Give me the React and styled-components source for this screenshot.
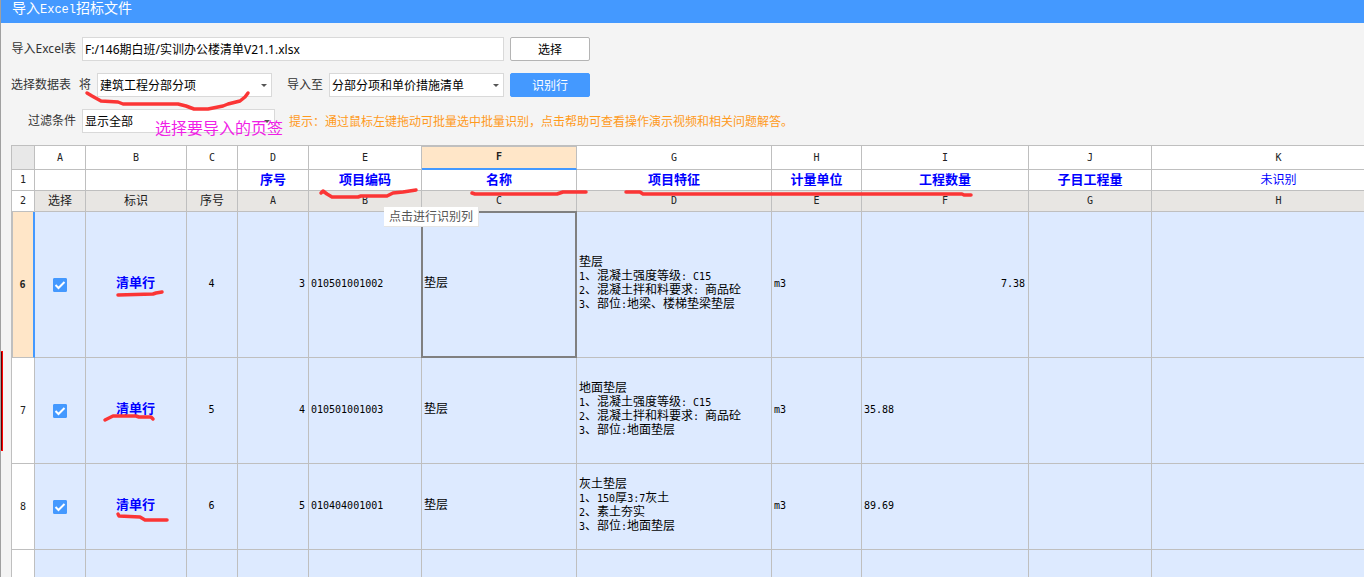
import React, { useState } from 'react';
import styled, { createGlobalStyle, css } from 'styled-components';

const columns = [
  { letter: 'A', width: 51, title: '', source: '选择' },
  { letter: 'B', width: 101, title: '', source: '标识' },
  { letter: 'C', width: 51, title: '', source: '序号' },
  { letter: 'D', width: 71, title: '序号', source: 'A' },
  { letter: 'E', width: 113, title: '项目编码', source: 'B' },
  { letter: 'F', width: 155, title: '名称', source: 'C' },
  { letter: 'G', width: 195, title: '项目特征', source: 'D' },
  { letter: 'H', width: 90, title: '计量单位', source: 'E' },
  { letter: 'I', width: 167, title: '工程数量', source: 'F' },
  { letter: 'J', width: 123, title: '子目工程量', source: 'G' },
  { letter: 'K', width: 254, title: '未识别', source: 'H', plain: true },
];

const rows = [
  {
    id: 6,
    height: 146,
    index: 4,
    order: 3,
    code: '010501001002',
    name: '垫层',
    feature: [
      '垫层',
      '1、混凝土强度等级: C15',
      '2、混凝土拌和料要求: 商品砼',
      '3、部位:地梁、楼梯垫梁垫层',
    ],
    unit: 'm3',
    amount: '7.38',
    amountAlign: 'right',
  },
  {
    id: 7,
    height: 106,
    index: 5,
    order: 4,
    code: '010501001003',
    name: '垫层',
    feature: [
      '地面垫层',
      '1、混凝土强度等级: C15',
      '2、混凝土拌和料要求: 商品砼',
      '3、部位:地面垫层',
    ],
    unit: 'm3',
    amount: '35.88',
    amountAlign: 'left',
  },
  {
    id: 8,
    height: 86,
    index: 6,
    order: 5,
    code: '010404001001',
    name: '垫层',
    feature: ['灰土垫层', '1、150厚3:7灰土', '2、素土夯实', '3、部位:地面垫层'],
    unit: 'm3',
    amount: '89.69',
    amountAlign: 'left',
  },
];

const strokes = [
  '87,93 92,96 101,101 118,102 123,104 178,104 186,106 194,109 208,109 223,106 228,104 240,101 245,97 248,93',
  '321,193 323,191 327,194 332,197 358,197 361,196 387,196 393,193 403,192 416,190',
  '472,193 475,194 557,194 563,192 586,192',
  '626,192 640,192 643,194 962,194 964,195 971,195',
  '118,295 153,294 156,293 162,292',
  '105,420 113,416 136,416 139,417 151,417 153,419',
  '118,514 119,516 140,517 145,520 167,520',
];

// half-width characters take exactly half of a Chinese one
const GridText = ({ children }) =>
  String(children)
    .split(/([ -~]+)/)
    .map((part, i) => (i % 2 ? <Latin key={i}>{part}</Latin> : part));

const SelectBox = ({ id, options, wide }) => (
  <SelectWrap $wide={wide}>
    <Select id={id}>
      {options.map((option) => (
        <option key={option}>{option}</option>
      ))}
    </Select>
  </SelectWrap>
);

const RowCheck = ({ id }) => {
  const [checked, setChecked] = useState(true);
  return (
    <CheckWrap>
      <CheckInput
        type='checkbox'
        aria-label={`选择 ${id}`}
        checked={checked}
        onChange={() => setChecked(!checked)}
      />
      {checked && (
        <CheckMark viewBox='0 0 14 14'>
          <path d='M2.5 7 L5.5 10 L11.5 4' />
        </CheckMark>
      )}
    </CheckWrap>
  );
};

const App = () => {
  const [path, setPath] = useState('F:/146期白班/实训办公楼清单V21.1.xlsx');
  return (
    <Page>
      <GlobalStyle />
      <TitleBar>
        导入<TitleLatin>Excel</TitleLatin>招标文件
      </TitleBar>

      <Form>
        <FormRow>
          <Label htmlFor='path'>导入Excel表</Label>
          <PathInput
            id='path'
            value={path}
            onChange={(e) => setPath(e.target.value)}
          />
          <Button>选择</Button>
        </FormRow>
        <FormRow>
          <LabelPair htmlFor='sheet'>
            <span>选择数据表</span>
            <span>将</span>
          </LabelPair>
          <SelectBox id='sheet' options={['建筑工程分部分项']} />
          <Label htmlFor='target' $spaced>
            导入至
          </Label>
          <SelectBox id='target' options={['分部分项和单价措施清单']} />
          <Button $primary>识别行</Button>
        </FormRow>
        <FormRow>
          <Label htmlFor='filter'>过滤条件</Label>
          <SelectBox id='filter' options={['显示全部']} wide />
          <Hint>
            提示：通过鼠标左键拖动可批量选中批量识别，点击帮助可查看操作演示视频和相关问题解答。
          </Hint>
        </FormRow>
      </Form>

      <TableArea>
        <Table>
          <colgroup>
            <Col $width={23} />
            {columns.map((col) => (
              <Col key={col.letter} $width={col.width} />
            ))}
          </colgroup>
          <thead>
            <Row $height={24}>
              <Corner />
              {columns.map((col) => (
                <HeadCell key={col.letter} $activeCol={col.letter === 'F'}>
                  <GridText>{col.letter}</GridText>
                </HeadCell>
              ))}
            </Row>
          </thead>
          <tbody>
            <Row $height={21}>
              <HeadCell>
                <GridText>1</GridText>
              </HeadCell>
              {columns.map((col) => (
                <TitleCell key={col.letter} $plain={col.plain}>
                  {col.title}
                </TitleCell>
              ))}
            </Row>
            <Row $height={21}>
              <HeadCell>
                <GridText>2</GridText>
              </HeadCell>
              {columns.map((col) => (
                <SourceCell key={col.letter}>
                  <GridText>{col.source}</GridText>
                </SourceCell>
              ))}
            </Row>
            {rows.map((row) => (
              <Row key={row.id} $height={row.height}>
                <HeadCell $activeRow={row.id === 6}>
                  <GridText>{row.id}</GridText>
                </HeadCell>
                <DataCell $align='center'>
                  <RowCheck id={row.id} />
                </DataCell>
                <DataCell $align='center'>
                  <Mark>清单行</Mark>
                </DataCell>
                <DataCell $align='center'>
                  <GridText>{row.index}</GridText>
                </DataCell>
                <DataCell $align='right'>
                  <GridText>{row.order}</GridText>
                </DataCell>
                <DataCell>
                  <GridText>{row.code}</GridText>
                </DataCell>
                <DataCell $selected={row.id === 6}>{row.name}</DataCell>
                <DataCell>
                  {row.feature.map((line) => (
                    <Line key={line}>
                      <GridText>{line}</GridText>
                    </Line>
                  ))}
                </DataCell>
                <DataCell>
                  <GridText>{row.unit}</GridText>
                </DataCell>
                <DataCell $align={row.amountAlign}>
                  <GridText>{row.amount}</GridText>
                </DataCell>
                <DataCell />
                <DataCell />
              </Row>
            ))}
            <Row $height={86}>
              <HeadCell />
              {columns.map((col) => (
                <DataCell key={col.letter} />
              ))}
            </Row>
          </tbody>
        </Table>
      </TableArea>

      <Tooltip>点击进行识别列</Tooltip>
      <Note>选择要导入的页签</Note>
      <Ink>
        {strokes.map((points) => (
          <polyline key={points} points={points} />
        ))}
        <rect x='0' y='351' width='3' height='100' fill='#ff0000' />
        <rect x='1' y='352' width='1' height='98' fill='#600000' />
      </Ink>
    </Page>
  );
};

export default App;

const uiFont = `'Noto Sans', 'Noto Sans CJK SC', sans-serif`;
const gridFont = `'Liberation Serif', 'Noto Sans CJK SC', serif`;
const latinFont = `'DejaVu Sans Mono', monospace`;

const GlobalStyle = createGlobalStyle`
  * {
    box-sizing: border-box;
  }
  body {
    margin: 0;
    font-family: ${uiFont};
    font-size: 12px;
  }
  input, select, button {
    font: inherit;
    color: inherit;
  }
`;

const Page = styled.div`
  position: relative;
  display: flex;
  flex-direction: column;
  height: 100vh;
  overflow: hidden;
  border-left: 1px solid #a0a0a0;
  background: #f4f4f4;
  color: #000;
`;

const TitleBar = styled.header`
  height: 23px;
  flex-shrink: 0;
  padding-left: 11px;
  background: #4499ff;
  color: #fff;
  font-family: ${gridFont};
  font-size: 14px;
  line-height: 17px;
`;

const TitleLatin = styled.span`
  font-family: 'Liberation Mono', monospace;
  font-size: 12px;
`;

const Form = styled.form`
  display: flex;
  flex-direction: column;
  flex-shrink: 0;
  gap: 12px;
  padding: 14px 10px 12px;
`;

const FormRow = styled.div`
  display: flex;
  align-items: center;
  gap: 6px;
  height: 24px;
  white-space: nowrap;
`;

const Label = styled.label`
  min-width: ${({ $spaced }) => ($spaced ? '0' : '65px')};
  margin-left: ${({ $spaced }) => ($spaced ? '9px' : '0')};
  text-align: right;
  line-height: 24px;
  color: #333;
`;

const LabelPair = styled.label`
  display: flex;
  gap: 8px;
  line-height: 24px;
  color: #333;
`;

const PathInput = styled.input`
  width: 422px;
  height: 24px;
  padding: 0 2px;
  border: 1px solid #d9d9d9;
  background: #fff;
`;

const SelectWrap = styled.div`
  position: relative;
  width: ${({ $wide }) => ($wide ? '193px' : '175px')};
  height: 24px;

  &::after {
    content: '';
    position: absolute;
    top: 11px;
    right: 5px;
    border: 3px solid transparent;
    border-top-color: #555;
    border-bottom: 0;
    pointer-events: none;
  }
`;

const Select = styled.select`
  appearance: none;
  width: 100%;
  height: 24px;
  padding: 0 2px;
  border: 1px solid #d9d9d9;
  border-radius: 0;
  background: #fff;
`;

const Button = styled.button.attrs({ type: 'button' })`
  width: 80px;
  height: 24px;
  padding: 0;
  border: 1px solid ${({ $primary }) => ($primary ? '#4499ff' : '#b4b4b4')};
  border-radius: 2px;
  background: ${({ $primary }) => ($primary ? '#4499ff' : '#fff')};
  color: ${({ $primary }) => ($primary ? '#fff' : '#000')};
`;

const Hint = styled.span`
  margin-left: 8px;
  color: #ff9a1c;
`;

const TableArea = styled.div`
  flex: 1;
  min-height: 0;
  margin-left: 10px;
  overflow: hidden;
`;

const Table = styled.table`
  width: 1395px;
  table-layout: fixed;
  border-collapse: separate;
  border-spacing: 0;
  border: solid #bfbfbf;
  border-width: 1px 0 0 1px;
  font-family: ${gridFont};
  font-size: 12px;
  line-height: 14px;
`;

const Latin = styled.span`
  font-family: ${latinFont};
  font-size: 10px;
  white-space: pre;
`;

const Col = styled.col`
  width: ${({ $width }) => $width}px;
`;

const Row = styled.tr`
  height: ${({ $height }) => $height}px;
`;

const cell = css`
  padding: 0 0 1px;
  border: solid #bfbfbf;
  border-width: 0 1px 1px 0;
  text-align: center;
  vertical-align: middle;
  white-space: nowrap;
`;

const HeadCell = styled.th`
  ${cell}
  background: #fff;
  color: #222;
  font-weight: normal;

  ${({ $activeCol }) =>
    $activeCol &&
    css`
      border-bottom: 2px solid #4499ff;
      background: #ffe6c8;
      box-shadow: inset 0 1px #bfbfbf;
      font-weight: bold;
    `}

  ${({ $activeRow }) =>
    $activeRow &&
    css`
      border-right: 2px solid #4499ff;
      background: #ffe6c8;
      box-shadow: inset 1px 0 #bfbfbf;
      font-weight: bold;
    `}
`;

const Corner = styled.td`
  ${cell}
  background: #e8e8e8;
`;

const TitleCell = styled.td`
  ${cell}
  background: #fff;
  color: #0000ff;
  font-size: ${({ $plain }) => ($plain ? '12px' : '13px')};
  font-weight: ${({ $plain }) => ($plain ? 'normal' : 'bold')};
`;

const SourceCell = styled.td`
  ${cell}
  background: #e8e6e3;
  color: #222;
`;

const DataCell = styled.td`
  ${cell}
  position: relative;
  padding: 0 3px 3px 2px;
  background: #ddeaff;
  text-align: ${({ $align }) => $align || 'left'};

  ${({ $selected }) =>
    $selected &&
    css`
      &::after {
        content: '';
        position: absolute;
        inset: -1px;
        border: 2px solid #808080;
      }
    `}
`;

const Line = styled.div`
  height: 14px;
`;

const Mark = styled.span`
  color: #0000ff;
  font-size: 13px;
  font-weight: bold;
`;

const CheckWrap = styled.span`
  display: inline-grid;
  padding-top: 4px;
  vertical-align: middle;
`;

const CheckInput = styled.input`
  grid-area: 1 / 1;
  appearance: none;
  width: 14px;
  height: 14px;
  margin: 0;
  border: 1px solid #4499ff;
  border-radius: 1px;
  background: #fff;

  &:checked {
    background: #4499ff;
  }
`;

const CheckMark = styled.svg`
  grid-area: 1 / 1;
  width: 14px;
  height: 14px;
  fill: none;
  stroke: #fff;
  stroke-width: 2;
  pointer-events: none;
`;

const Tooltip = styled.div`
  position: absolute;
  top: 207px;
  left: 383px;
  padding: 0 5px;
  border: 1px solid #e4e4e4;
  border-width: 0 1px 1px 0;
  background: #fff;
  color: #555;
  line-height: 19px;
`;

const Note = styled.div`
  position: absolute;
  top: 118px;
  left: 154px;
  color: #f01ee6;
  font-size: 16px;
  line-height: 20px;
`;

const Ink = styled.svg`
  position: absolute;
  top: 0;
  left: -1px;
  width: 100%;
  height: 100%;
  pointer-events: none;

  polyline {
    fill: none;
    stroke: #fb3535;
    stroke-width: 3.5;
    stroke-linecap: round;
    stroke-linejoin: round;
  }
`;
